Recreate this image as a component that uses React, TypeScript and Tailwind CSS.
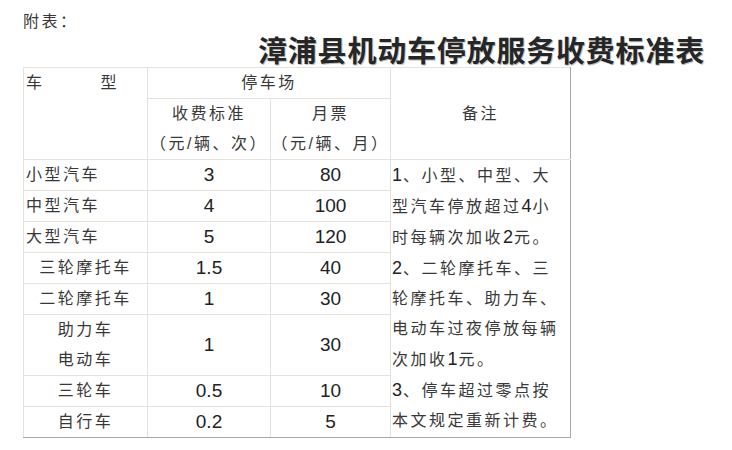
const rows: { name: string; fee: string; month: string; align: 'left' | 'center' }[] = [
  { name: '小型汽车', fee: '3', month: '80', align: 'left' },
  { name: '中型汽车', fee: '4', month: '100', align: 'left' },
  { name: '大型汽车', fee: '5', month: '120', align: 'left' },
  { name: '三轮摩托车', fee: '1.5', month: '40', align: 'center' },
  { name: '二轮摩托车', fee: '1', month: '30', align: 'center' },
  { name: '助力车\n电动车', fee: '1', month: '30', align: 'center' },
  { name: '三轮车', fee: '0.5', month: '10', align: 'center' },
  { name: '自行车', fee: '0.2', month: '5', align: 'center' },
]

const notes = [
  '1、小型、中型、大',
  '型汽车停放超过4小',
  '时每辆次加收2元。',
  '2、二轮摩托车、三',
  '轮摩托车、助力车、',
  '电动车过夜停放每辆',
  '次加收1元。',
  '3、停车超过零点按',
  '本文规定重新计费。',
]

const cell = 'border border-[#e6e3dc] p-0 leading-[30px] align-middle'

// digits in the original are set a little larger than the Chinese text
function Num({ text }: { text: string }) {
  return (
    <>
      {text.split(/(\d+)/).map((part, i) =>
        /\d/.test(part) ? (
          <span key={i} className="text-[18px] tracking-[1px] text-[#222]">
            {part}
          </span>
        ) : (
          part
        ),
      )}
    </>
  )
}

export default function App() {
  return (
    <div className="min-h-[450px] w-[732px] bg-white pl-[23px] pt-[6px] font-['Liberation_Sans','Noto_Sans_CJK_SC',sans-serif] text-[16px] tracking-[2.5px] text-[#383838]">
      <p className="leading-[31px]">附表：</p>
      <h1 className="pl-[235px] text-[29px] leading-[30px] font-bold tracking-[0.8px] text-[#262626] [text-shadow:1px_1px_0_#c4c4c4]">
        漳浦县机动车停放服务收费标准表
      </h1>

      <table className="w-[547px] table-fixed border-collapse">
        <colgroup>
          <col className="w-[124px]" />
          <col className="w-[123px]" />
          <col className="w-[120px]" />
          <col className="w-[180px]" />
        </colgroup>
        <thead>
          <tr>
            <td rowSpan={2} className={`${cell} !align-top pl-[2px]`}>
              <span>车</span>
              <span className="ml-[56px]">型</span>
            </td>
            <td colSpan={2} className={`${cell} text-center`}>停车场</td>
            <td rowSpan={2} className={`${cell} border-r-[#a9a9a9] text-center`}>备注</td>
          </tr>
          <tr>
            <td className={`${cell} text-center`}>
              收费标准
              <br />
              （元/辆、次）
            </td>
            <td className={`${cell} text-center`}>
              月票
              <br />
              （元/辆、月）
            </td>
          </tr>
        </thead>
        <tbody>
          {rows.map((r, i) => {
            const last = i === rows.length - 1
            const bottom = last ? 'border-b-[#a9a9a9]' : ''
            return (
              <tr key={r.name}>
                <td className={`${cell} ${bottom} whitespace-pre-line ${r.align === 'left' ? 'pl-[2px] text-left' : 'text-center'}`}>
                  {r.name}
                </td>
                <td className={`${cell} ${bottom} text-center text-[19px] tracking-normal text-[#222]`}>{r.fee}</td>
                <td className={`${cell} ${bottom} text-center text-[19px] tracking-normal text-[#222]`}>{r.month}</td>
                {i === 0 && (
                  <td rowSpan={rows.length} className={`${cell} !align-top border-r-[#a9a9a9] border-b-[#a9a9a9] pl-[1px] leading-[30.8px]`}>
                    {notes.map((n) => (
                      <div key={n} className="whitespace-nowrap">
                        <Num text={n} />
                      </div>
                    ))}
                  </td>
                )}
              </tr>
            )
          })}
        </tbody>
      </table>
    </div>
  )
}
